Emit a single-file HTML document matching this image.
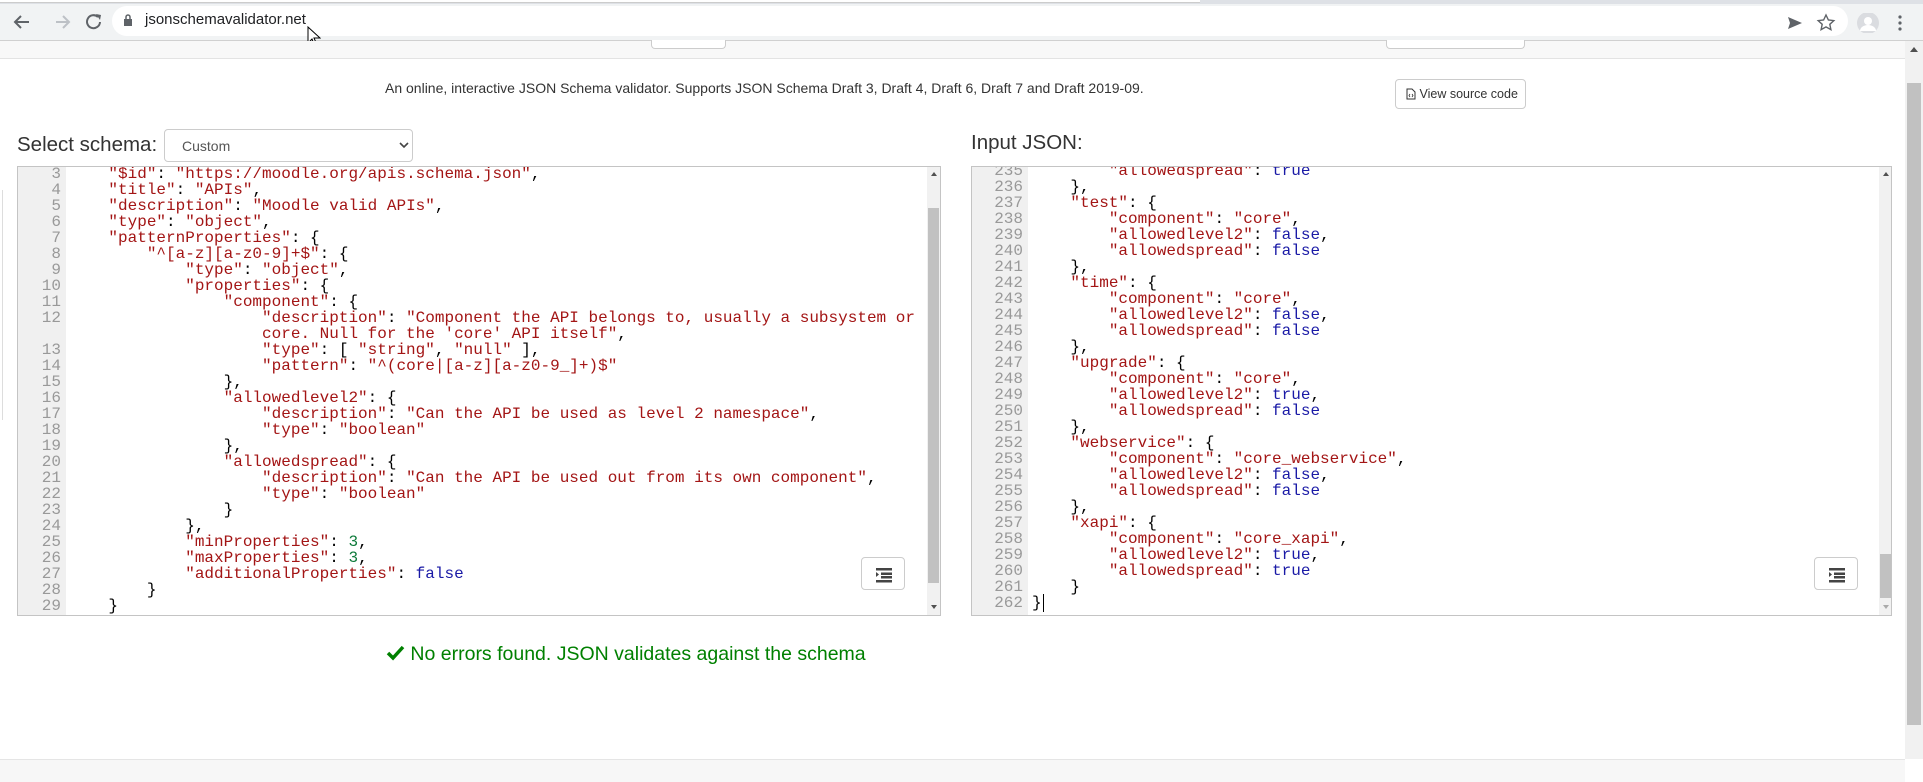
<!DOCTYPE html>
<html><head><meta charset="utf-8">
<style>
*{box-sizing:border-box}
body{margin:0;width:1923px;height:782px;overflow:hidden;background:#fff;font-family:"Liberation Sans",sans-serif;position:relative}
.abs{position:absolute}
.ed{position:absolute;border:1px solid #c4c4c4;background:#fff;overflow:hidden}
.gut{position:absolute;left:0;top:0;bottom:0;background:#f0f0f0}
.code{position:absolute;font-family:"Liberation Mono",monospace;font-size:16px;line-height:16px;color:#000}
.code div{height:16px;white-space:pre}
.gn{position:absolute;font-family:"Liberation Mono",monospace;font-size:16px;line-height:16px;color:#999;text-align:right}
.gn div{height:16px;white-space:pre}
.s{color:#a31515}
.b{color:#1a1aa6}
.n{color:#0d7a3a}
.sb{position:absolute;background:#f1f1f1;width:13px}
.th{position:absolute;left:1px;width:11px;background:#c1c1c1}
.fmt{position:absolute;width:44px;height:33px;border:1px solid #ccc;border-radius:4px;background:#fff}
</style></head><body>

<!-- chrome -->
<div class="abs" style="left:0;top:0;width:1923px;height:41px;background:#f1f3f4;border-bottom:1px solid #d0d0d0"></div>
<div class="abs" style="left:0;top:0;width:1923px;height:4px;background:#dee1e6"></div>
<div class="abs" style="left:0;top:0;width:1200px;height:3px;background:#fff;border-bottom:1px solid #ccc"></div>
<div class="abs" style="left:112px;top:6px;width:1736px;height:30px;border-radius:15px;background:#fff"></div>
<svg class="abs" style="left:12px;top:12px" width="100" height="20" viewBox="0 0 100 20">
<path d="M17 10H4M9 4L3 10l6 6" stroke="#5f6368" stroke-width="2" fill="none"/>
<path d="M44 10h12M51 4l6 6-6 6" stroke="#bdc1c6" stroke-width="2" fill="none"/>
<path d="M86 5a6.5 6.5 0 1 0 2 5" stroke="#5f6368" stroke-width="2" fill="none"/><path d="M84 2l5 1-1 5z" fill="#5f6368"/>
</svg>
<svg class="abs" style="left:123px;top:14px" width="10" height="13"><rect x="1" y="5" width="8" height="7" fill="#5f6368"/><path d="M3 5V3a2 2 0 0 1 4 0v2" stroke="#5f6368" stroke-width="1.5" fill="none"/></svg>
<div class="abs" style="left:145px;top:11px;font-size:15px;color:#202124">jsonschemavalidator.net</div>
<svg class="abs" style="left:307px;top:26px" width="14" height="22"><path d="M1 1v16l4-4 3 7 2-1-3-7h6z" fill="#fff" stroke="#000"/></svg>
<svg class="abs" style="left:1786px;top:13px" width="130" height="20">
<path d="M2 4l14 6-14 6 2-6z" fill="#5f6368"/>
<path d="M40 2l2.4 5 5.4.6-4 3.7 1.1 5.3-4.9-2.7-4.9 2.7 1.1-5.3-4-3.7 5.4-.6z" fill="none" stroke="#5f6368" stroke-width="1.4"/>
<circle cx="82" cy="10" r="11" fill="#dadce0"/><circle cx="82" cy="8" r="4" fill="#fff"/><path d="M74 18a8 6 0 0 1 16 0z" fill="#fff"/>
<circle cx="114" cy="4" r="1.6" fill="#5f6368"/><circle cx="114" cy="10" r="1.6" fill="#5f6368"/><circle cx="114" cy="16" r="1.6" fill="#5f6368"/>
</svg>

<!-- page top strip -->
<div class="abs" style="left:0;top:41px;width:1905px;height:18px;background:#f8f8f8;border-bottom:1px solid #e3e3e3"></div>
<div class="abs" style="left:651px;top:40px;width:75px;height:9px;border:1px solid #ccc;border-top:none;border-radius:0 0 4px 4px;background:#fff"></div>
<div class="abs" style="left:1386px;top:40px;width:139px;height:9px;border:1px solid #ccc;border-top:none;border-radius:0 0 4px 4px;background:#fff"></div>
<div class="abs" style="left:0;top:190px;width:3px;height:230px;border-right:1px solid #ddd"></div>

<!-- page scrollbar -->
<div class="abs" style="left:1905px;top:41px;width:18px;height:718px;background:#f1f1f1"></div>
<div class="abs" style="left:1907px;top:83px;width:14px;height:642px;background:#c1c1c1"></div>
<div class="abs" style="left:1910px;top:47px;width:0;height:0;border:4px solid transparent;border-bottom:5px solid #505050;border-top:none"></div>

<!-- footer -->
<div class="abs" style="left:0;top:759px;width:1905px;height:23px;background:#f7f7f7;border-top:1px solid #e5e5e5"></div>

<div class="abs" style="left:385px;top:80px;font-size:14px;color:#333;white-space:nowrap">An online, interactive JSON Schema validator. Supports JSON Schema Draft 3, Draft 4, Draft 6, Draft 7 and Draft 2019-09.</div>
<div class="abs" style="left:1395px;top:79px;width:131px;height:30px;border:1px solid #ccc;border-radius:4px;background:#fff;font-size:12.5px;color:#333;padding:7px 0 0 10px;white-space:nowrap"><svg width="10" height="12" style="vertical-align:-2px"><path d="M1 1h5l3 3v7H1z" fill="none" stroke="#333"/><path d="M4 6l-1 1.5 1 1.5M6 6l1 1.5-1 1.5" stroke="#333" fill="none" stroke-width=".8"/></svg> View source code</div>

<div class="abs" style="left:17px;top:133px;font-size:20.5px;color:#333">Select schema:</div>
<div class="abs" style="left:164px;top:129px;width:249px;height:33px;border:1px solid #ccc;border-radius:4px;background:#fff;font-size:14px;color:#555;padding:8px 0 0 17px">Custom</div>
<svg class="abs" style="left:399px;top:142px" width="10" height="7"><path d="M1 1l4 4 4-4" stroke="#444" stroke-width="1.6" fill="none"/></svg>
<div class="abs" style="left:971px;top:131px;font-size:20.5px;color:#333">Input JSON:</div>

<!-- left editor -->
<div class="ed" style="left:17px;top:166px;width:924px;height:450px">
<div class="gut" style="width:48px"></div>
<div class="gn" style="left:0;width:43px;top:-1px"><div>3</div><div>4</div><div>5</div><div>6</div><div>7</div><div>8</div><div>9</div><div>10</div><div>11</div><div>12</div><div></div><div>13</div><div>14</div><div>15</div><div>16</div><div>17</div><div>18</div><div>19</div><div>20</div><div>21</div><div>22</div><div>23</div><div>24</div><div>25</div><div>26</div><div>27</div><div>28</div><div>29</div></div>
<div class="code" style="left:52px;top:-1px"><div>    <span class="s">"$id"</span>: <span class="s">"https://moodle.org/apis.schema.json"</span>,</div><div>    <span class="s">"title"</span>: <span class="s">"APIs"</span>,</div><div>    <span class="s">"description"</span>: <span class="s">"Moodle valid APIs"</span>,</div><div>    <span class="s">"type"</span>: <span class="s">"object"</span>,</div><div>    <span class="s">"patternProperties"</span>: {</div><div>        <span class="s">"^[a-z][a-z0-9]+$"</span>: {</div><div>            <span class="s">"type"</span>: <span class="s">"object"</span>,</div><div>            <span class="s">"properties"</span>: {</div><div>                <span class="s">"component"</span>: {</div><div>                    <span class="s">"description"</span>: <span class="s">"Component the API belongs to, usually a subsystem or</span></div><div>                    <span class="s">core. Null for the 'core' API itself"</span>,</div><div>                    <span class="s">"type"</span>: [ <span class="s">"string"</span>, <span class="s">"null"</span> ],</div><div>                    <span class="s">"pattern"</span>: <span class="s">"^(core|[a-z][a-z0-9_]+)$"</span></div><div>                },</div><div>                <span class="s">"allowedlevel2"</span>: {</div><div>                    <span class="s">"description"</span>: <span class="s">"Can the API be used as level 2 namespace"</span>,</div><div>                    <span class="s">"type"</span>: <span class="s">"boolean"</span></div><div>                },</div><div>                <span class="s">"allowedspread"</span>: {</div><div>                    <span class="s">"description"</span>: <span class="s">"Can the API be used out from its own component"</span>,</div><div>                    <span class="s">"type"</span>: <span class="s">"boolean"</span></div><div>                }</div><div>            },</div><div>            <span class="s">"minProperties"</span>: <span class="n">3</span>,</div><div>            <span class="s">"maxProperties"</span>: <span class="n">3</span>,</div><div>            <span class="s">"additionalProperties"</span>: <span class="b">false</span></div><div>        }</div><div>    }</div></div>
<div class="sb" style="left:909px;top:0;height:448px"><div class="th" style="top:41px;height:375px"></div></div>
<div class="abs" style="left:913px;top:5px;border:3px solid transparent;border-bottom:4px solid #505050;border-top:none"></div>
<div class="abs" style="left:913px;top:438px;border:3px solid transparent;border-top:4px solid #505050;border-bottom:none"></div>
<div class="fmt" style="left:843px;top:390px"><svg width="44" height="33" viewBox="0 0 44 33"><rect x="14" y="10" width="16" height="2.5" fill="#444"/><rect x="19" y="14.5" width="11" height="2.5" fill="#444"/><rect x="19" y="18" width="11" height="2.5" fill="#444"/><rect x="14" y="22" width="16" height="2.5" fill="#444"/><path d="M14 14l3 2.5-3 2.5z" fill="#444"/></svg></div>
</div>

<!-- right editor -->
<div class="ed" style="left:971px;top:166px;width:921px;height:450px">
<div class="gut" style="width:56px"></div>
<div class="gn" style="left:0;width:51px;top:-4px"><div>235</div><div>236</div><div>237</div><div>238</div><div>239</div><div>240</div><div>241</div><div>242</div><div>243</div><div>244</div><div>245</div><div>246</div><div>247</div><div>248</div><div>249</div><div>250</div><div>251</div><div>252</div><div>253</div><div>254</div><div>255</div><div>256</div><div>257</div><div>258</div><div>259</div><div>260</div><div>261</div><div>262</div></div>
<div class="code" style="left:60px;top:-4px"><div>        <span class="s">"allowedspread"</span>: <span class="b">true</span></div><div>    },</div><div>    <span class="s">"test"</span>: {</div><div>        <span class="s">"component"</span>: <span class="s">"core"</span>,</div><div>        <span class="s">"allowedlevel2"</span>: <span class="b">false</span>,</div><div>        <span class="s">"allowedspread"</span>: <span class="b">false</span></div><div>    },</div><div>    <span class="s">"time"</span>: {</div><div>        <span class="s">"component"</span>: <span class="s">"core"</span>,</div><div>        <span class="s">"allowedlevel2"</span>: <span class="b">false</span>,</div><div>        <span class="s">"allowedspread"</span>: <span class="b">false</span></div><div>    },</div><div>    <span class="s">"upgrade"</span>: {</div><div>        <span class="s">"component"</span>: <span class="s">"core"</span>,</div><div>        <span class="s">"allowedlevel2"</span>: <span class="b">true</span>,</div><div>        <span class="s">"allowedspread"</span>: <span class="b">false</span></div><div>    },</div><div>    <span class="s">"webservice"</span>: {</div><div>        <span class="s">"component"</span>: <span class="s">"core_webservice"</span>,</div><div>        <span class="s">"allowedlevel2"</span>: <span class="b">false</span>,</div><div>        <span class="s">"allowedspread"</span>: <span class="b">false</span></div><div>    },</div><div>    <span class="s">"xapi"</span>: {</div><div>        <span class="s">"component"</span>: <span class="s">"core_xapi"</span>,</div><div>        <span class="s">"allowedlevel2"</span>: <span class="b">true</span>,</div><div>        <span class="s">"allowedspread"</span>: <span class="b">true</span></div><div>    }</div><div>}<span style="border-left:1px solid #000;margin-left:1px"></span></div></div>
<div class="sb" style="left:907px;top:0;height:448px"><div class="th" style="top:387px;height:44px"></div></div>
<div class="abs" style="left:911px;top:5px;border:3px solid transparent;border-bottom:4px solid #505050;border-top:none"></div>
<div class="abs" style="left:911px;top:438px;border:3px solid transparent;border-top:4px solid #aaa;border-bottom:none"></div>
<div class="fmt" style="left:842px;top:390px"><svg width="44" height="33" viewBox="0 0 44 33"><rect x="14" y="10" width="16" height="2.5" fill="#444"/><rect x="19" y="14.5" width="11" height="2.5" fill="#444"/><rect x="19" y="18" width="11" height="2.5" fill="#444"/><rect x="14" y="22" width="16" height="2.5" fill="#444"/><path d="M14 14l3 2.5-3 2.5z" fill="#444"/></svg></div>
</div>

<div class="abs" style="left:386px;top:643px;font-size:19.5px;color:#008000;white-space:nowrap"><svg width="19" height="16" style="vertical-align:-1px"><path d="M2 8l5 5L17 2" stroke="#008000" stroke-width="3.5" fill="none"/></svg> No errors found. JSON validates against the schema</div>

</body></html>
